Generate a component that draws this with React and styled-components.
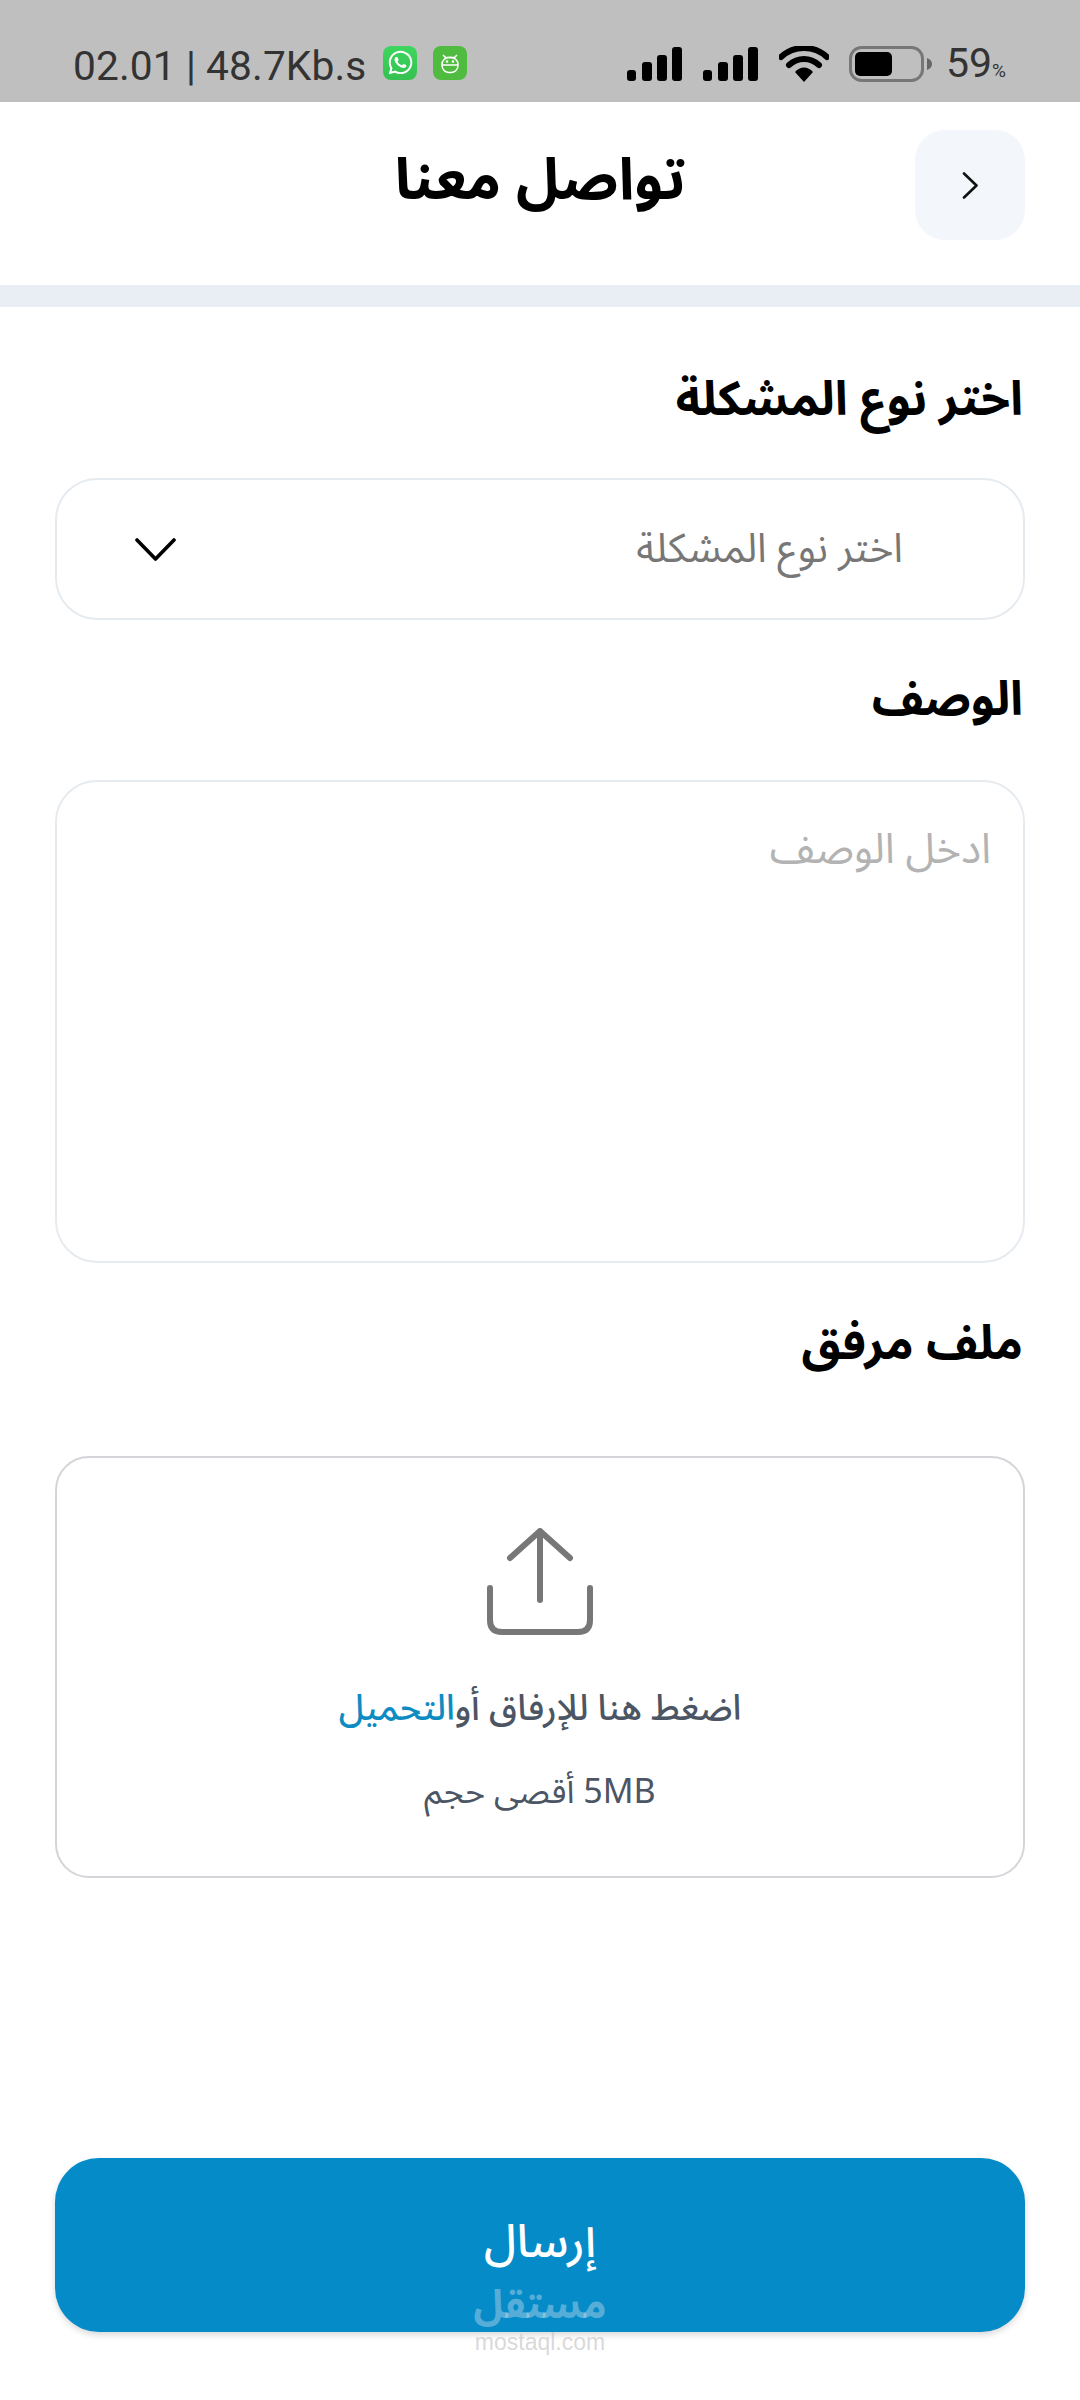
import React from 'react';
import styled, { createGlobalStyle } from 'styled-components';
import { FaWhatsapp } from 'react-icons/fa';

const Global = createGlobalStyle`
  html, body { margin: 0; padding: 0; background: #fff; }
  * { box-sizing: border-box; }
`;
const arabic = `"Noto Sans Arabic", "DejaVu Sans", "Liberation Sans", sans-serif`;

const Page = styled.div`
  position: relative; width: 1080px; height: 2400px; background: #fff;
  display: flex; flex-direction: column; font-family: ${arabic}; overflow: hidden;
`;
const StatusBar = styled.div`
  height: 102px; background: #bfbfbf; display: flex; align-items: center; direction: ltr;
  padding: 29px 74px 0 73px; font-family: Roboto, sans-serif; color: #333;
`;
const StatusText = styled.span`font-size: 40.7px; line-height: 44px; white-space: nowrap; letter-spacing: .1px;`;
const AppBadge = styled.span`
  width: 34px; height: 34px; border-radius: 8px; background: ${p => p.$bg}; color: #fff;
  display: flex; align-items: center; justify-content: center; margin-left: ${p => p.$gap}px;
  position: relative; top: -3px;
`;
const StatusRight = styled.div`margin-left: auto; display: flex; align-items: center; margin-top: -3px;`;
const Percent = styled.span`font-size: 41px; line-height: 44px; margin-left: 14px; position: relative; top: 3px;`;
const PercentSign = styled.span`font-size: 19px;`;
const Signal = styled.svg`display: block; margin-right: ${p => p.$gap}px;`;

const Header = styled.header`
  height: 183px; padding: 28px 55px 0; display: grid; grid-template-columns: 1fr auto 1fr; align-items: start;
`;
const BackButton = styled.button`
  justify-self: start; width: 110px; height: 110px; border: 0; border-radius: 30px; background: #f3f6fa;
  display: flex; align-items: center; justify-content: center; padding: 0;
`;
const Title = styled.h1`margin: 16px 0 0; font-size: 58px; line-height: 70px; font-weight: 700; color: #000;`;
const Divider = styled.div`height: 22px; background: #e9eef5;`;

const Form = styled.main`flex: 1; padding: 63px 55px 68px; display: flex; flex-direction: column;`;
const Label = styled.label`
  display: block; font-size: 47.5px; line-height: 60px; font-weight: 700; color: #000; margin: ${p => p.$top}px 2px ${p => p.$bottom}px;
`;
const Select = styled.div`
  height: 142px; border: 2px solid #e6ebf0; border-radius: 42px; display: flex; align-items: center;
  justify-content: space-between; padding: 0 120px 0 78px;
`;
const SelectText = styled.span`font-size: 40.5px; color: #777;`;
const TextArea = styled.div`
  height: 483px; border: 2px solid #e6ebf0; border-radius: 42px; padding: 46px 32px; font-size: 42px; line-height: 44px; color: #b3b3b3;
`;
const Upload = styled.div`
  height: 422px; border: 2.5px solid #d3d5d9; border-radius: 34px; display: flex; flex-direction: column; align-items: center; padding-top: 70px;
`;
const UploadHint = styled.div`margin-top: 48px; font-size: 35.5px; line-height: 50px; font-weight: 500; color: #4b5563; white-space: nowrap;`;
const Accent = styled.span`color: #0d8cc2;`;
const UploadLimit = styled.div`margin-top: 34px; font-size: 34px; line-height: 48px; color: #4b5563;`;
const Submit = styled.button`
  margin-top: auto; height: 174px; border: 0; border-radius: 44px; background: #058bc8; color: #fff; font-family: ${arabic};
  font-size: 46px; font-weight: 500; box-shadow: 0 3px 6px rgba(0,0,0,.15); padding: 0 0 6px;
`;
const Watermark = styled.div`
  position: absolute; left: 474px; top: 2282px; width: 132px; display: flex; flex-direction: column; align-items: center;
  color: rgba(205,225,238,.42); pointer-events: none;
`;
const WatermarkMain = styled.span`font-size: 40px; line-height: 48px; font-weight: 700; white-space: nowrap;`;
const WatermarkSub = styled.span`font-family: "Liberation Sans", sans-serif; font-size: 23px; line-height: 24px; color: rgba(185,185,185,.55); direction: ltr;`;

const Bars = ({ first, gap }) => (
  <Signal $gap={gap} width="55" height="34" viewBox="0 0 55 34">
    <rect x="0" y={first} width="9" height={34 - first} rx="3" />
    <rect x="15" y="15" width="10" height="19" rx="3" />
    <rect x="30" y="8" width="10" height="26" rx="3" />
    <rect x="45" y="0" width="10" height="34" rx="3" />
  </Signal>
);

export default function App() {
  return (
    <Page dir="rtl">
      <Global />
      <StatusBar>
        <StatusText>02.01 | 48.7Kb.s</StatusText>
        <AppBadge $bg="linear-gradient(#3ed65f,#35c04f)" $gap={17}><FaWhatsapp size={27} /></AppBadge>
        <AppBadge $bg="#4fbc3f" $gap={16}>
          <svg width="24" height="24" viewBox="0 0 24 24" fill="none" stroke="#fff" strokeWidth="1.5">
            <path d="M5 4l2.5 2.5h9L19 4" />
            <rect x="4" y="6.5" width="16" height="15" rx="7" />
            <path d="M4 14h16" />
            <circle cx="9" cy="10.5" r=".6" /><circle cx="15" cy="10.5" r=".6" />
          </svg>
        </AppBadge>
        <StatusRight>
          <Bars first={23} gap={21} />
          <Bars first={23} gap={21} />
          <svg width="50" height="36" viewBox="0 0 50 36" style={{ marginRight: 20 }}>
            <path d="M2 11C15 -1 35 -1 48 11" fill="none" stroke="#000" strokeWidth="6" strokeLinecap="round" />
            <path d="M10 19C19 11 31 11 40 19" fill="none" stroke="#000" strokeWidth="6" strokeLinecap="round" />
            <path d="M16 26C21 20 29 20 34 26L25 36Z" fill="#000" />
          </svg>
          <svg width="83" height="36" viewBox="0 0 83 36">
            <rect x="1.5" y="1.5" width="72" height="33" rx="11" fill="none" stroke="#777" strokeWidth="3" />
            <rect x="6" y="6" width="37" height="24" rx="5" fill="#000" />
            <path d="M78 12c3 1 5 3 5 6s-2 5-5 6z" fill="#666" />
          </svg>
          <Percent>59<PercentSign>%</PercentSign></Percent>
        </StatusRight>
      </StatusBar>

      <Header>
        <BackButton aria-label="رجوع">
          <svg width="17" height="27" viewBox="0 0 17 27" fill="none" stroke="#111" strokeWidth="2.6" strokeLinecap="round" strokeLinejoin="round">
            <path d="M2 1.5L14.5 13.5L2 25.5" />
          </svg>
        </BackButton>
        <Title>تواصل معنا</Title>
      </Header>
      <Divider />

      <Form>
        <Label $top={0} $bottom={48}>اختر نوع المشكلة</Label>
        <Select>
          <SelectText>اختر نوع المشكلة</SelectText>
          <svg width="41" height="23" viewBox="0 0 41 23" fill="none" stroke="#000" strokeWidth="3.6" strokeLinecap="round" strokeLinejoin="round">
            <path d="M2 2L20.5 21L39 2" />
          </svg>
        </Select>
        <Label $top={50} $bottom={50}>الوصف</Label>
        <TextArea>ادخل الوصف</TextArea>
        <Label $top={51} $bottom={82}>ملف مرفق</Label>
        <Upload>
          <svg width="106" height="108" viewBox="0 0 106 108" fill="none" stroke="#777" strokeWidth="6" strokeLinecap="round" strokeLinejoin="round">
            <path d="M23 30L53 3L83 30" />
            <path d="M53 4V72" />
            <path d="M3 60V92C3 100 7 104 15 104H91C99 104 103 100 103 92V60" />
          </svg>
          <UploadHint>اضغط هنا للإرفاق أو<Accent>التحميل</Accent></UploadHint>
          <UploadLimit>5MB أقصى حجم</UploadLimit>
        </Upload>
        <Submit>إرسال</Submit>
      </Form>

      <Watermark>
        <WatermarkMain>مستقل</WatermarkMain>
        <WatermarkSub>mostaql.com</WatermarkSub>
      </Watermark>
    </Page>
  );
}
